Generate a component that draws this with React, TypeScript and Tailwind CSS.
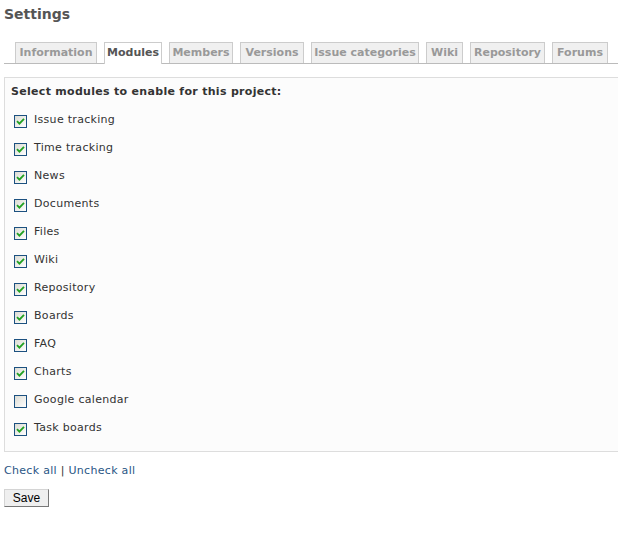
const tabs = [
    { label: "Information", w: "w-[82px]" },
    { label: "Modules", w: "w-[58px]", active: true },
    { label: "Members", w: "w-[64px]" },
    { label: "Versions", w: "w-[64px]" },
    { label: "Issue categories", w: "w-[108px]" },
    { label: "Wiki", w: "w-[37px]" },
    { label: "Repository", w: "w-[75px]" },
    { label: "Forums", w: "w-[56px]" },
]

const modules = [
    { name: "Issue tracking", on: true },
    { name: "Time tracking", on: true },
    { name: "News", on: true },
    { name: "Documents", on: true },
    { name: "Files", on: true },
    { name: "Wiki", on: true },
    { name: "Repository", on: true },
    { name: "Boards", on: true },
    { name: "FAQ", on: true },
    { name: "Charts", on: true },
    { name: "Google calendar", on: false },
    { name: "Task boards", on: true },
]

const Checkbox = ({ checked }: { checked: boolean }) => (
    <span className="w-[13px] h-[13px] -mt-px border border-[#1c5180] bg-gradient-to-br from-[#dcdcd4] to-white flex items-center justify-center">
        {checked && (
            <svg width="9" height="9" viewBox="0 0 9 9">
                <path d="M1 4.2 L3.4 6.6 L8 1.8" fill="none" stroke="#21a121" strokeWidth="1.8" />
            </svg>
        )}
    </span>
)

const App = () => {
    return (
        <div className="w-[618px] h-[533px] bg-white overflow-hidden font-['DejaVu_Sans',Verdana,sans-serif] text-[11px] tracking-[0.3px] text-[#333]">
            <h2 className="pl-1 pt-[5px] text-[14px] tracking-normal leading-[18px] font-bold text-[#555]">Settings</h2>

            <div className="mt-[19px] ml-1 w-[700px] border-b border-[#bbb] pl-[11px] flex items-end gap-[7px]">
                {tabs.map((t) =>
                    t.active ? (
                        <div
                            key={t.label}
                            className={`${t.w} h-[22px] -mb-px border border-b-0 border-[#ccc] bg-white text-[#555] font-bold tracking-normal flex items-center justify-center`}
                        >
                            {t.label}
                        </div>
                    ) : (
                        <div
                            key={t.label}
                            className={`${t.w} h-[21px] border border-b-0 border-[#ccc] bg-[#f0f0f0] text-[#999] font-bold tracking-normal flex items-center justify-center`}
                        >
                            {t.label}
                        </div>
                    )
                )}
            </div>

            <div className="mt-[13px] ml-1 w-[640px] border border-[#ddd] bg-[#fcfcfc] pl-[6px] pt-[6px] pb-[7px]">
                <p className="h-4 leading-4 font-bold text-[11px] text-[#333] mb-2">Select modules to enable for this project:</p>
                {modules.map((m) => (
                    <div key={m.name} className="h-7 flex items-center gap-[7px] pl-[3px]">
                        <Checkbox checked={m.on} />
                        <span className="leading-4 -mt-[4px]">{m.name}</span>
                    </div>
                ))}
            </div>

            <p className="mt-[11px] ml-1 leading-4 text-[#2a5685]">
                <a href="#">Check all</a> <span className="text-[#333]">|</span> <a href="#">Uncheck all</a>
            </p>

            <button className="mt-[10px] ml-1 w-[45px] h-[18px] bg-[#efefef] border border-t-[#d4d4d4] border-l-[#d4d4d4] border-r-[#777] border-b-[#777] text-[12px] tracking-normal leading-none text-black font-['Liberation_Sans',Arial,sans-serif]">
                Save
            </button>
        </div>
    )
}

export default App
